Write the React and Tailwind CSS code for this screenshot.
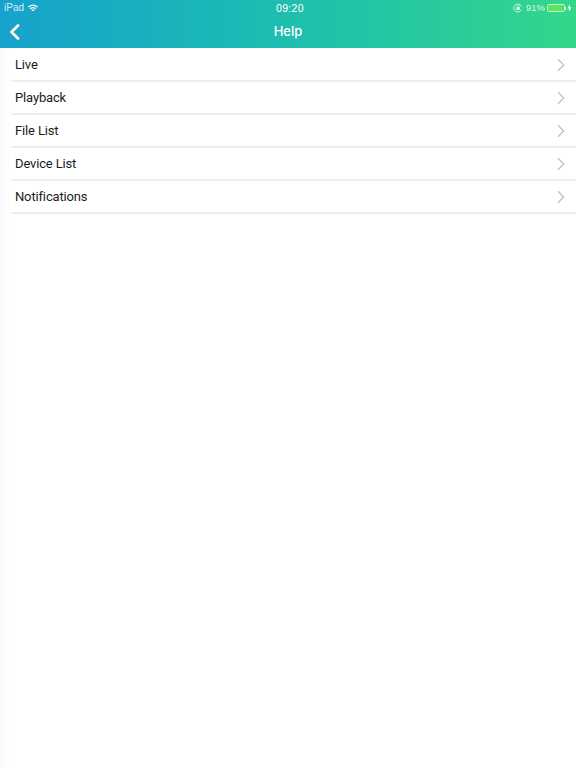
import { ChevronRight } from 'lucide-react';

const items = ['Live', 'Playback', 'File List', 'Device List', 'Notifications'];

const App = () => {
    return (
        <div className="flex flex-col w-[576px] h-[768px] bg-white overflow-hidden font-['Liberation_Sans',sans-serif]">
            <div className="h-[48px] shrink-0 bg-gradient-to-r from-[#17a2cc] to-[#33d789] text-white">
                <div className="relative flex items-center justify-between h-4 pl-[4px] pr-[4px] text-[10px] leading-4">
                    <div className="flex items-center gap-[4px]">
                        <span className="opacity-80">iPad</span>
                        <svg width="10" height="8" viewBox="0 0 20 15" fill="none" stroke="currentColor" strokeWidth="2.6" strokeLinecap="round">
                            <path d="M1.5 5.2a12 12 0 0 1 17 0" />
                            <path d="M5 8.8a7 7 0 0 1 10 0" />
                            <path d="M8.4 12a2.4 2.4 0 0 1 3.2 0" />
                        </svg>
                    </div>
                    <span className="absolute left-[276px] top-0 text-[10.5px] tracking-[0.3px]">09:20</span>
                    <div className="flex items-center">
                        <svg className="mr-[3px] opacity-80" width="10" height="10" viewBox="0 0 20 20" fill="none" stroke="currentColor" strokeWidth="1.8">
                            <path d="M17 7a8 8 0 1 0 0 6" />
                            <rect x="6.5" y="8" width="7" height="6" fill="currentColor" stroke="none" />
                            <path d="M8 8V6.5a2 2 0 0 1 4 0V8" strokeWidth="1.2" />
                        </svg>
                        <span className="mr-[2px] text-[9.5px] opacity-80">91%</span>
                        <div className="flex items-center h-[8px] w-[18px] border border-white/70 rounded-[2px]">
                            <div className="h-full w-[91%] bg-[#5ce65c] rounded-[1px]"></div>
                        </div>
                        <div className="w-[1px] h-[3px] bg-white/80"></div>
                        <svg className="ml-[1px]" width="5" height="8" viewBox="0 0 5 8" fill="currentColor">
                            <path d="M3 0L0.5 4.5H2.2L1.8 8L4.5 3.2H2.8Z" />
                        </svg>
                    </div>
                </div>
                <div className="relative flex items-center justify-center h-[32px]">
                    <svg className="absolute left-[9px] top-[8px]" width="11" height="16" viewBox="0 0 11 16" fill="none" stroke="currentColor" strokeWidth="2.6" strokeLinecap="round" strokeLinejoin="round">
                        <path d="M9 1.5L2.5 8L9 14.5" />
                    </svg>
                    <span className="text-[13px] font-medium font-['Inter',sans-serif]">Help</span>
                </div>
            </div>
            <div className="flex-1 bg-gradient-to-r from-[#fafafa] to-white to-[11px]">
                <ul className="pt-[1px]">
                    {items.map((item) => (
                        <li key={item} className="ml-[11px] h-[33px] flex items-center justify-between pl-[4px] pr-[4px] bg-white border-b-2 border-[#eeeeee]">
                            <span className="text-[13px] tracking-[-0.15px] text-[#1c1c1c] font-['Roboto',sans-serif]">{item}</span>
                            <ChevronRight className="w-[22px] h-[22px] text-[#c0c0c0]" strokeWidth={1.3} />
                        </li>
                    ))}
                </ul>
            </div>
        </div>
    );
};

export default App;
